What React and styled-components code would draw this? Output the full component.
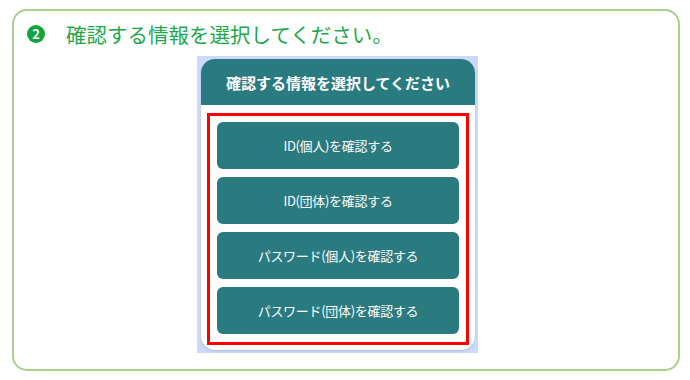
import React from "react";
import styled, { createGlobalStyle } from "styled-components";

const GlobalStyle = createGlobalStyle`
  html, body {
    margin: 0;
    padding: 0;
    background: #ffffff;
    font-family: "Noto Sans CJK JP", "Noto Sans", sans-serif;
  }
`;

const Frame = styled.div`
  box-sizing: border-box;
  margin: 9px 0 0 12px;
  width: 668px;
  height: 362px;
  border: 2px solid #a9d18e;
  border-radius: 15px;
  display: flex;
  flex-direction: column;
`;

const Title = styled.div`
  display: flex;
  align-items: center;
  height: 26px;
  margin: 10px 0 0 13px;
  color: #1ea84b;
  font-size: 20.5px;
  line-height: 26px;
`;

const Step = styled.span`
  width: 18px;
  height: 18px;
  border-radius: 50%;
  background: #13a43f;
  color: #ffffff;
  font-size: 13px;
  font-weight: bold;
  line-height: 18px;
  text-align: center;
  margin-right: 21px;
`;

const Shot = styled.div`
  box-sizing: border-box;
  margin: 9px 0 0 183px;
  width: 281px;
  height: 297px;
  background: #cdd9f8;
  padding: 3px 3px 3px 4px;
`;

const Card = styled.div`
  height: 100%;
  background: #ffffff;
  border-radius: 14px;
  overflow: hidden;
  box-shadow: 0 1px 2px rgba(120, 130, 160, 0.35);
  display: flex;
  flex-direction: column;
`;

const CardHeader = styled.div`
  height: 46px;
  background: #2a7b80;
  color: #ffffff;
  font-size: 15px;
  font-weight: bold;
  display: flex;
  align-items: center;
  justify-content: center;
`;

const Highlight = styled.div`
  margin: 8px 6px 0 6px;
  border: 3px solid #ff0000;
  padding: 6px 7px 8px 7px;
  display: flex;
  flex-direction: column;
  gap: 8px;
`;

const Choice = styled.button`
  height: 47px;
  border: none;
  border-radius: 6px;
  background: #2a7b80;
  color: #ffffff;
  font-family: inherit;
  font-size: 13px;
  letter-spacing: -0.3px;
  cursor: pointer;
`;

const choices = [
  "ID(個人)を確認する",
  "ID(団体)を確認する",
  "パスワード(個人)を確認する",
  "パスワード(団体)を確認する",
];

export default function App() {
  return (
    <>
      <GlobalStyle />
      <Frame>
        <Title>
          <Step>2</Step>
          確認する情報を選択してください。
        </Title>
        <Shot>
          <Card>
            <CardHeader>確認する情報を選択してください</CardHeader>
            <Highlight>
              {choices.map((c) => (
                <Choice key={c}>{c}</Choice>
              ))}
            </Highlight>
          </Card>
        </Shot>
      </Frame>
    </>
  );
}
